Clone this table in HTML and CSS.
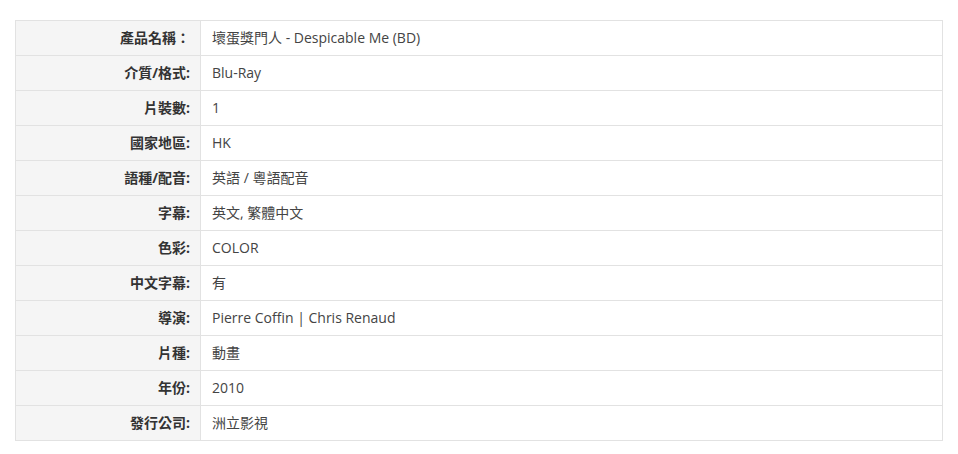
FILE: index.html
```html
<!DOCTYPE html>
<html lang="zh-Hant">
<head>
<meta charset="utf-8">
<link rel="stylesheet" href="styles.css">
</head>
<body>
<table class="spec">
<tbody>
<tr><th>產品名稱：</th><td>壞蛋獎門人 - Despicable Me (BD)</td></tr>
<tr><th>介質/格式:</th><td>Blu-Ray</td></tr>
<tr><th>片裝數:</th><td>1</td></tr>
<tr><th>國家地區:</th><td>HK</td></tr>
<tr><th>語種/配音:</th><td>英語 / 粵語配音</td></tr>
<tr><th>字幕:</th><td>英文, 繁體中文</td></tr>
<tr><th>色彩:</th><td>COLOR</td></tr>
<tr><th>中文字幕:</th><td>有</td></tr>
<tr><th>導演:</th><td>Pierre Coffin | Chris Renaud</td></tr>
<tr><th>片種:</th><td>動畫</td></tr>
<tr><th>年份:</th><td>2010</td></tr>
<tr><th>發行公司:</th><td>洲立影視</td></tr>
</tbody>
</table>
</body>
</html>
```
FILE: styles.css
```css
html, body {
  margin: 0;
  background: #fff;
}
body {
  padding: 20px 15px 0 15px;
  font-family: "Open Sans", "Noto Sans CJK TC", sans-serif;
  font-size: 14px;
  color: #333;
}
.spec {
  width: 928px;
  border-collapse: collapse;
  border: 1px solid #e2e2e2;
}
.spec th, .spec td {
  height: 34px;
  padding: 0;
  border: 1px solid #e2e2e2;
  vertical-align: middle;
  line-height: 20px;
}
.spec th {
  width: 174px;
  padding-right: 10px;
  text-align: right;
  font-weight: bold;
  background: #f5f5f5;
  color: #333;
}
.spec td {
  padding-left: 11px;
  text-align: left;
  color: #444;
}
```
